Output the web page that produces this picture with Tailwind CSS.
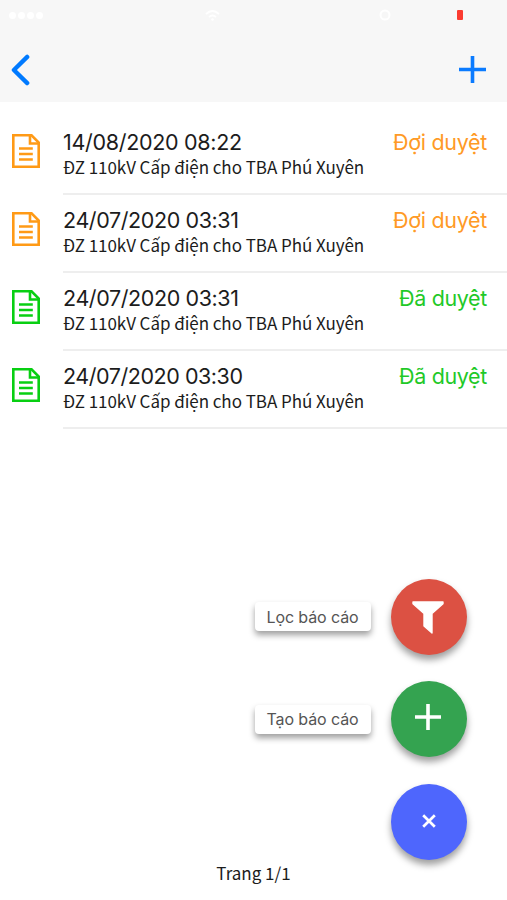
<!DOCTYPE html>
<html lang="vi">
  <head>
    <meta charset="UTF-8" />
    <meta name="viewport" content="width=device-width, initial-scale=1.0" />
    <title>Báo cáo</title>
    <script src="https://cdn.jsdelivr.net/npm/@tailwindcss/browser@4"></script>
  </head>
  <body class="bg-white">
    <svg class="hidden">
      <symbol id="doc" viewBox="0 0 28 34">
        <path d="M1.3 1.3H19.5L26.7 8.5V32.7H1.3Z" fill="none" stroke="currentColor" stroke-width="2.6" />
        <path d="M18 1.5V9.5H26.5" fill="none" stroke="currentColor" stroke-width="2.6" />
        <path d="M7 14.5H20.8M7 20H20.8M7 25.5H20.8" fill="none" stroke="currentColor" stroke-width="2.6" />
      </symbol>
    </svg>

    <div class="relative flex flex-col h-[900px] w-[507px] overflow-hidden bg-white font-['Inter',sans-serif] text-[#1c1c1c]">
      <header class="h-[102px] shrink-0 bg-[#f7f7f7]">
        <!-- Status bar -->
        <div class="flex h-[30px] items-center pl-[9px] pr-[44px] text-[12px] text-white">
          <div class="flex gap-[2px]">
            <span class="size-[7px] rounded-full bg-white"></span>
            <span class="size-[7px] rounded-full bg-white"></span>
            <span class="size-[7px] rounded-full bg-white"></span>
            <span class="size-[7px] rounded-full bg-white"></span>
          </div>
          <svg class="ml-[162px] h-[11px] w-[15px]" viewBox="0 0 15 11">
            <path d="M1 4Q7.5 -2 14 4M4 7Q7.5 4 11 7" fill="none" stroke="white" stroke-width="1.8" />
            <circle cx="7.5" cy="9.5" r="1.3" fill="white" />
          </svg>
          <svg class="ml-[159px] size-[12px]" viewBox="0 0 12 12">
            <circle cx="6" cy="6" r="4.5" fill="none" stroke="white" stroke-width="2" />
          </svg>
          <span class="ml-auto h-[10px] w-[6px] rounded-[1px] bg-[#fb3b30]"></span>
        </div>
        <!-- Nav bar -->
        <div class="flex h-[72px] items-center justify-between pl-[11px] pr-[21px] pt-[7px]">
          <svg class="h-[32px] w-[19px]" viewBox="0 0 19 32">
            <path d="M16.2 2.9L2.9 16L16.2 29.1" fill="none" stroke="#007aff" stroke-width="4.3" stroke-linecap="round" stroke-linejoin="round" />
          </svg>
          <svg class="size-[27px]" viewBox="0 0 27 27">
            <path d="M13.5 0V27M0 13.5H27" fill="none" stroke="#0b7bff" stroke-width="3.6" />
          </svg>
        </div>
      </header>

      <!-- Report list -->
      <ul class="pt-[15px]">
        <li class="flex h-[78px] pl-[12px]">
          <svg class="mt-[17px] h-[34px] w-[28px] text-[#ff9a16]"><use href="#doc" /></svg>
          <div class="ml-[23px] flex grow justify-between border-b-2 border-[#eeeeee] pr-[20px] pt-[12px]">
            <div>
              <p class="text-[21.5px] leading-[27px] tracking-[-0.3px] whitespace-nowrap">14/08/2020 08:22</p>
              <p class="font-['Noto_Sans_CJK_SC',sans-serif] text-[17px] leading-[22px] tracking-[-0.05px] whitespace-nowrap">ĐZ 110kV Cấp điện cho TBA Phú Xuyên</p>
            </div>
            <span class="-ml-4 text-[21.5px] leading-[27px] tracking-[-0.3px] whitespace-nowrap text-[#ff9a26]">Đợi duyệt</span>
          </div>
        </li>
        <li class="flex h-[78px] pl-[12px]">
          <svg class="mt-[17px] h-[34px] w-[28px] text-[#ff9a16]"><use href="#doc" /></svg>
          <div class="ml-[23px] flex grow justify-between border-b-2 border-[#eeeeee] pr-[20px] pt-[12px]">
            <div>
              <p class="text-[21.5px] leading-[27px] tracking-[-0.4px] whitespace-nowrap">24/07/2020 03:31</p>
              <p class="font-['Noto_Sans_CJK_SC',sans-serif] text-[17px] leading-[22px] tracking-[-0.05px] whitespace-nowrap">ĐZ 110kV Cấp điện cho TBA Phú Xuyên</p>
            </div>
            <span class="-ml-4 text-[21.5px] leading-[27px] tracking-[-0.3px] whitespace-nowrap text-[#ff9a26]">Đợi duyệt</span>
          </div>
        </li>
        <li class="flex h-[78px] pl-[12px]">
          <svg class="mt-[17px] h-[34px] w-[28px] text-[#08cf12]"><use href="#doc" /></svg>
          <div class="ml-[23px] flex grow justify-between border-b-2 border-[#eeeeee] pr-[20px] pt-[12px]">
            <div>
              <p class="text-[21.5px] leading-[27px] tracking-[-0.4px] whitespace-nowrap">24/07/2020 03:31</p>
              <p class="font-['Noto_Sans_CJK_SC',sans-serif] text-[17px] leading-[22px] tracking-[-0.05px] whitespace-nowrap">ĐZ 110kV Cấp điện cho TBA Phú Xuyên</p>
            </div>
            <span class="-ml-4 text-[21.5px] leading-[27px] tracking-[-0.35px] whitespace-nowrap text-[#1fc928]">Đã duyệt</span>
          </div>
        </li>
        <li class="flex h-[78px] pl-[12px]">
          <svg class="mt-[17px] h-[34px] w-[28px] text-[#08cf12]"><use href="#doc" /></svg>
          <div class="ml-[23px] flex grow justify-between border-b-2 border-[#eeeeee] pr-[20px] pt-[12px]">
            <div>
              <p class="text-[21.5px] leading-[27px] tracking-[-0.45px] whitespace-nowrap">24/07/2020 03:30</p>
              <p class="font-['Noto_Sans_CJK_SC',sans-serif] text-[17px] leading-[22px] tracking-[-0.05px] whitespace-nowrap">ĐZ 110kV Cấp điện cho TBA Phú Xuyên</p>
            </div>
            <span class="-ml-4 text-[21.5px] leading-[27px] tracking-[-0.35px] whitespace-nowrap text-[#1fc928]">Đã duyệt</span>
          </div>
        </li>
      </ul>

      <p class="mt-auto pb-[15px] text-center font-['Noto_Sans_CJK_SC',sans-serif] text-[17px] leading-[24px]">Trang 1/1</p>

      <!-- Floating actions -->
      <div class="absolute right-[40.5px] bottom-[40.5px] flex flex-col items-end gap-[26.3px]">
        <div class="flex items-center gap-[20px]">
          <span class="flex h-[29px] w-[116px] items-center justify-center rounded-[4px] bg-white text-[16px] tracking-[-0.1px] text-[#555555] shadow-[0_4px_6px_rgba(0,0,0,0.38)]">Lọc báo cáo</span>
          <button class="flex size-[76px] items-center justify-center rounded-full bg-[#dc5143] shadow-[0_5px_7px_rgba(0,0,0,0.38)]">
            <svg class="mt-[2px] mr-px h-[33px] w-[32px]" viewBox="0 0 32 33">
              <path d="M1 1H31V2.8L20 12.5V32L12 25V12.5L1 2.8Z" fill="white" stroke="white" stroke-width="1.4" stroke-linejoin="round" />
            </svg>
          </button>
        </div>
        <div class="flex items-center gap-[20px]">
          <span class="flex h-[29px] w-[116px] items-center justify-center rounded-[4px] bg-white text-[16px] tracking-[-0.1px] text-[#555555] shadow-[0_4px_6px_rgba(0,0,0,0.38)]">Tạo báo cáo</span>
          <button class="flex size-[76px] items-center justify-center rounded-full bg-[#34a350] shadow-[0_5px_7px_rgba(0,0,0,0.38)]">
            <svg class="mb-[4px] mr-px size-[26px]" viewBox="0 0 26 26">
              <path d="M13 0V26M0 13H26" fill="none" stroke="white" stroke-width="3.6" />
            </svg>
          </button>
        </div>
        <button class="flex size-[76px] items-center justify-center rounded-full bg-[#4e66fd] shadow-[0_5px_7px_rgba(0,0,0,0.38)]">
          <svg class="mb-[2px] size-[14px]" viewBox="0 0 14 14">
            <path d="M1.2 1.2L12.8 12.8M12.8 1.2L1.2 12.8" fill="none" stroke="white" stroke-width="2.7" />
          </svg>
        </button>
      </div>
    </div>
  </body>
</html>
